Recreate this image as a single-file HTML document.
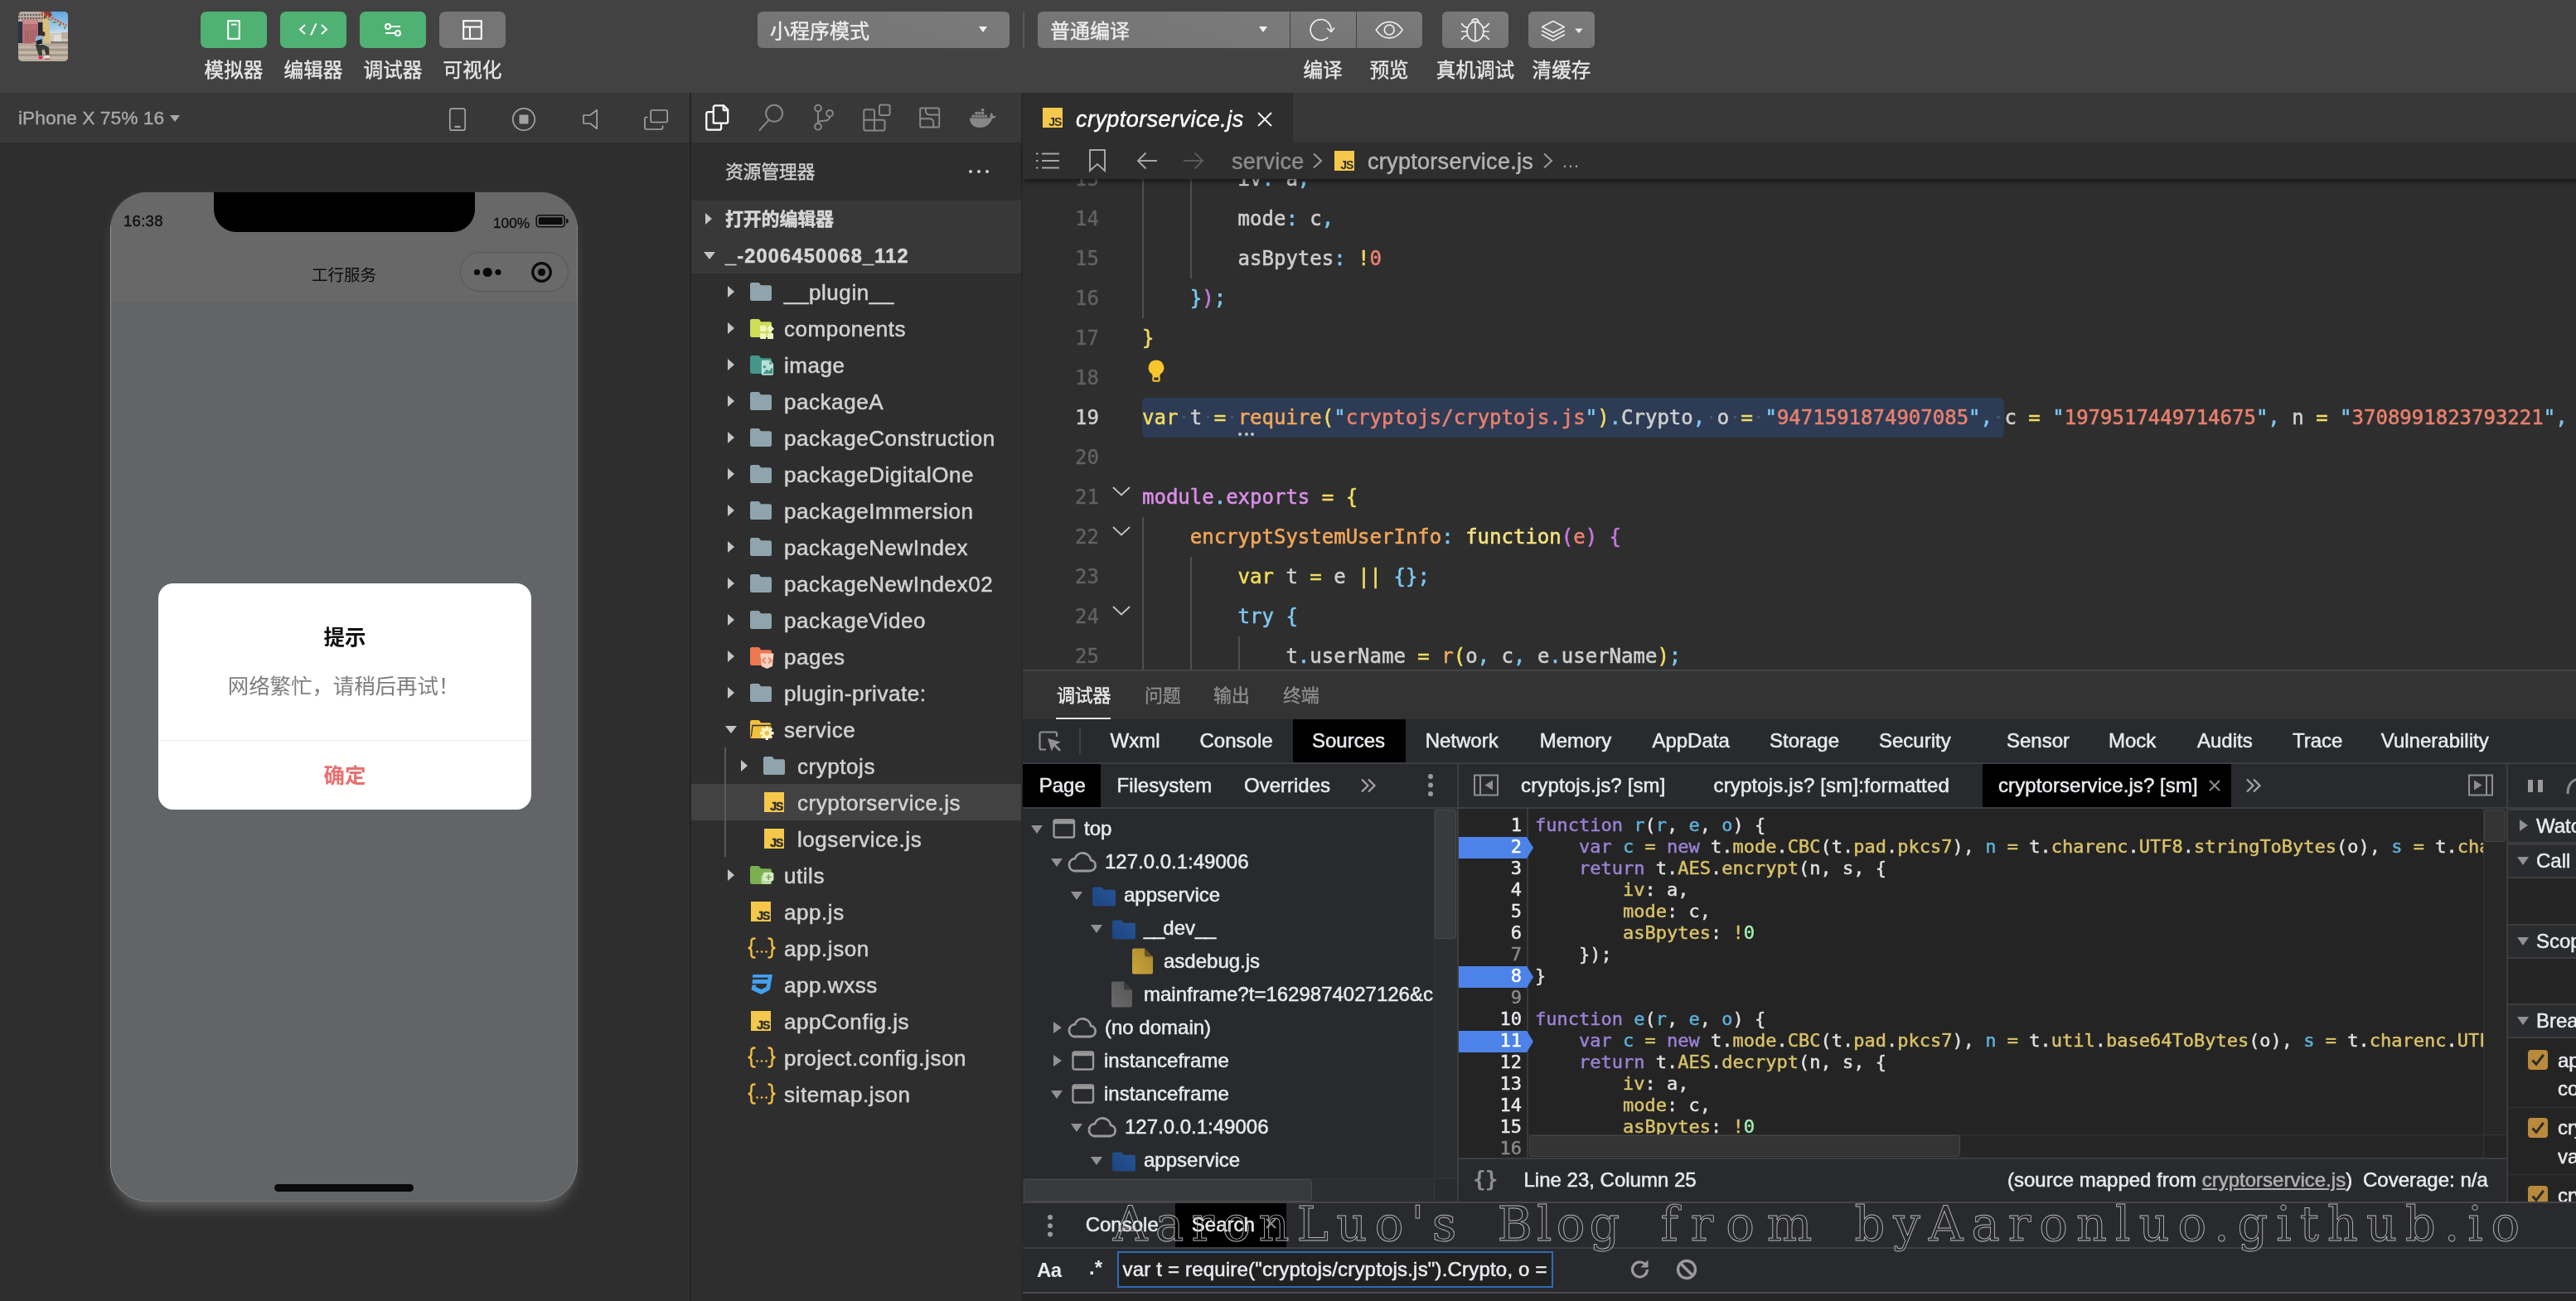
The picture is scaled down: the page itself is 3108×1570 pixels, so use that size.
<!DOCTYPE html>
<html lang="zh-CN">
<head>
<meta charset="utf-8">
<title>cryptorservice.js</title>
<style>
*{box-sizing:border-box;margin:0;padding:0}
html,body{width:3108px;height:1570px;overflow:hidden;background:#2e2e2e}
body{position:relative;font-family:"Liberation Sans","Noto Sans CJK SC",sans-serif;color:#d4d4d4;-webkit-font-smoothing:antialiased}
.abs{position:absolute}
.cjk{font-family:"Liberation Sans","Noto Sans CJK SC",sans-serif}
.mono{font-family:"DejaVu Sans Mono","Liberation Mono",monospace}
svg{display:block;overflow:visible}
/* top bar */
#topbar{left:0;top:0;width:3108px;height:112px;background:#424242}
.tbtn{top:14px;width:80px;height:44px;border-radius:7px;background:#50b174}
.tbtn.gray{background:#757575}
.tlabel{-webkit-text-stroke:.4px;top:66.500px;height:36px;line-height:36px;font-size:23.600px;color:#e6e6e6;text-align:center;white-space:nowrap}
.dd{-webkit-text-stroke:.4px;top:14px;height:44px;background:linear-gradient(200deg,#7b7b7b,#737373);color:#ededed;font-size:24px;line-height:44px;white-space:nowrap}
/* second row */
#row2{left:0;top:112px;width:3108px;height:60px;background:#383838}
/* sidebar */
.row{-webkit-text-stroke:.5px;left:834px;width:398px;height:44px;line-height:44px;font-size:26px;color:#d2d2d2;white-space:nowrap;letter-spacing:.55px}
.row .t{position:absolute;top:1px}
.tw{position:absolute;top:15px;width:0;height:0;border-style:solid}
.tw.r{border-width:7px 0 7px 8px;border-color:transparent transparent transparent #c4c4c4}
.tw.d{border-width:9px 7px 0 7px;border-color:#c4c4c4 transparent transparent transparent;top:18px}
.ico{position:absolute;top:8px;width:30px;height:28px}
/* editor */
.ln{left:1234px;width:92px;height:48px;line-height:48px;text-align:right;font-size:24px;color:#626262;-webkit-text-stroke:.4px}
.cl{left:1378px;height:48px;line-height:48px;font-size:24px;white-space:pre;color:#cecece;-webkit-text-stroke:.55px}
.guide{width:2px;background:#505050}
.fold{left:1342px;width:22px;height:12px}
/* syntax colours */
.y{color:#f1dc62}.o{color:#f2a65a}.s{color:#e8806e}.b{color:#7cc7f0}.g{color:#cecece}.v{color:#da8ee7}.p{color:#c678dd}.fy{color:#f6e27f}
/* devtools */
.dt{-webkit-text-stroke:.5px;font-size:24px;color:#e8eaed;white-space:nowrap;line-height:30px}
.tr{-webkit-text-stroke:.5px;height:40px;line-height:40px;font-size:24px;color:#e8eaed;white-space:nowrap;left:1234px;width:496px;overflow:hidden}
.tr .t{position:absolute;top:0}
.tri{position:absolute;width:0;height:0;border-style:solid}
.tri.d{border-width:10px 7.5px 0 7.5px;border-color:#919191 transparent transparent transparent;top:16px}
.tri.r{border-width:7.5px 0 7.5px 10px;border-color:transparent transparent transparent #919191;top:13px}
.sl{-webkit-text-stroke:.45px;left:1760px;width:76px;height:26px;line-height:26px;font-size:22px;text-align:right;color:#e8eaed}
.sc{-webkit-text-stroke:.45px;left:1852px;height:26px;line-height:26px;font-size:22px;white-space:pre;color:#e0e0e0}
.k{color:#9b82d6}.d{color:#5eb1d8}.pr{color:#d9c268}.n{color:#a4efb0}
.bp{left:1760px;width:90px;height:26px}
.sec{-webkit-text-stroke:.5px;left:3026px;width:82px;height:42px;background:#2a2b2e;border-top:2px solid #3d3d3d;border-bottom:2px solid #3d3d3d;font-size:24px;color:#e8eaed;line-height:38px;white-space:nowrap;overflow:hidden}
.cb{left:3050px;width:24px;height:24px;border-radius:4px;background:#b98a3c}
</style>
</head>
<body>
<div id="app" style="position:absolute;left:0;top:0;width:3108px;height:1570px;overflow:hidden;will-change:transform">
<!-- ============ TOP BAR ============ -->
<div id="topbar" class="abs"></div>
<div class="abs" style="left:22px;top:14px;width:60px;height:60px;border-radius:5px;overflow:hidden;background:#b5a898">
<svg width="60" height="60" viewBox="0 0 60 60">
<defs><filter id="avb" x="-10%" y="-10%" width="120%" height="120%"><feGaussianBlur stdDeviation=".55"/></filter>
<linearGradient id="sky" x1="0" y1="0" x2="0" y2="1"><stop offset="0" stop-color="#5aa2dd"/><stop offset=".7" stop-color="#a9cdea"/><stop offset="1" stop-color="#e4ecf0"/></linearGradient></defs>
<g filter="url(#avb)">
<rect x="-2" y="-2" width="64" height="64" fill="#b3a696"/>
<rect x="36" y="-2" width="26" height="32" fill="url(#sky)"/>
<rect x="-2" y="-2" width="40" height="14" fill="#b8aca2"/>
<path d="M0 4h36M0 8h34" stroke="#4a4040" stroke-width="1.600" stroke-dasharray="2 1.500"/>
<rect x="-2" y="12" width="8" height="26" fill="#2c3048"/>
<rect x="5" y="9.500" width="19" height="31" fill="#b56d70"/>
<rect x="6" y="10" width="17" height="5" fill="#c98a8a"/>
<path d="M9 22v17M12 22v17M15 22v17M18 22v17M21 22v17" stroke="#94545a" stroke-width=".800"/>
<rect x="24" y="13" width="6" height="18" fill="#2b2730"/>
<rect x="29.500" y="8" width="8.500" height="30" fill="#d9bf7c"/>
<path d="M31 0l8 0 2 5-10 4z" fill="#8a3a38"/>
<rect x="38" y="26" width="24" height="13" fill="#cfc9bc"/>
<rect x="43" y="28" width="9" height="9" fill="#e2ded6"/>
<rect x="52" y="25" width="10" height="8" fill="#b9b0a0"/>
<rect x="39" y="36" width="23" height="4" fill="#7e7a76"/>
<rect x="-2" y="38.500" width="64" height="24" fill="#b7aa9a"/>
<path d="M-2 46h64M-2 52.500h64" stroke="#8e8274" stroke-width="1.200"/>
<path d="M-2 43h64M-2 49.500h64M-2 56h64" stroke="#c9beb0" stroke-width="1.600"/>
<path d="M28 1L60 18" stroke="#c84a4a" stroke-width="2.600" stroke-dasharray="2 1.600"/>
<path d="M30 3.500L60 20" stroke="#e2c23c" stroke-width="2" stroke-dasharray="1.600 3.400"/>
<path d="M33 6.500L58 20" stroke="#3c9a58" stroke-width="2" stroke-dasharray="1.400 5"/>
<path d="M36 9L60 22" stroke="#3a64b8" stroke-width="1.800" stroke-dasharray="1.400 6"/>
<circle cx="29.500" cy="27" r="3" fill="#3a2f2e"/>
<path d="M21 31c2-2.500 6-3 9-1.500l.5 8-10 1z" fill="#8db2d6"/>
<path d="M21.500 35.500l7-2.500.5 5.500-7 1.500z" fill="#1f2026"/>
<path d="M20.500 40l10 0 6.500 3 .500 9-4 .500-2-7-3 .500 .500 7-4 .500z" fill="#393d37"/>
<path d="M18 37l-2.500 7 2 .500 2.500-6z" fill="#c9a58c"/>
<ellipse cx="27" cy="55.500" rx="2.600" ry="2" fill="#da2f68"/>
<ellipse cx="34.500" cy="55" rx="3.400" ry="2.200" fill="#e8dede"/>
<path d="M32 56.500l6 0 .5 1-6 .200z" fill="#c23a4a"/>
</g></svg></div>

<div class="abs tbtn" style="left:242px"><svg width="80" height="44" viewBox="0 0 80 44" fill="none" stroke="#fff" stroke-width="2"><rect x="33.2" y="11.2" width="13.6" height="21.6"/><path d="M37 15.6h6.5"/></svg></div>
<div class="abs tbtn" style="left:338px"><svg width="80" height="44" viewBox="0 0 80 44" fill="none" stroke="#fff" stroke-width="2" stroke-linejoin="miter"><path d="M30 16l-6 5.5 6 5.5M50 16l6 5.5-6 5.5M43.5 14.5l-6.5 14"/></svg></div>
<div class="abs tbtn" style="left:434px"><svg width="80" height="44" viewBox="0 0 80 44" fill="none" stroke="#fff" stroke-width="2"><circle cx="34" cy="18" r="3"/><path d="M37 18h12"/><circle cx="46" cy="26" r="3"/><path d="M31 26h12"/></svg></div>
<div class="abs tbtn gray" style="left:530px"><svg width="80" height="44" viewBox="0 0 80 44" fill="none" stroke="#fff" stroke-width="2"><rect x="29.2" y="11.2" width="21.6" height="21.6"/><path d="M29 18.5h22M37 18.5v14"/></svg></div>
<div class="abs tlabel cjk" style="left:232px;width:100px">模拟器</div>
<div class="abs tlabel cjk" style="left:328px;width:100px">编辑器</div>
<div class="abs tlabel cjk" style="left:424px;width:100px">调试器</div>
<div class="abs tlabel cjk" style="left:520px;width:100px">可视化</div>

<div class="abs dd cjk" style="left:914px;width:304px;border-radius:6px;padding:2px 0 0 15px">小程序模式</div>
<div class="abs" style="left:1181px;top:32px;width:0;height:0;border-style:solid;border-width:7px 5.5px 0 5.5px;border-color:#f0f0f0 transparent transparent transparent"></div>
<div class="abs" style="left:1234px;top:14px;width:2px;height:44px;background:#595959"></div>
<div class="abs dd cjk" style="left:1252px;width:304px;border-radius:6px 0 0 6px;padding:2px 0 0 15px">普通编译</div>
<div class="abs" style="left:1519px;top:32px;width:0;height:0;border-style:solid;border-width:7px 5.5px 0 5.5px;border-color:#f0f0f0 transparent transparent transparent"></div>
<div class="abs dd" style="left:1557px;width:79px"><svg width="79" height="44" viewBox="0 0 79 44" fill="none" stroke="#ededed" stroke-width="1.700" stroke-linecap="round" stroke-linejoin="round"><path d="M48.900 24.200A12.500 12.500 0 1 0 44.600 31.600"/><path d="M44.800 20.500l4.200 4 3.600-4.600"/></svg></div>
<div class="abs dd" style="left:1637px;width:79px;border-radius:0 6px 6px 0"><svg width="79" height="44" viewBox="0 0 79 44" fill="none" stroke="#ededed" stroke-width="1.700"><path d="M23.300 22.100c4.200-6.500 9.600-9.700 15.900-9.700s11.700 3.200 15.900 9.700c-4.200 6.500-9.600 9.700-15.900 9.700s-11.700-3.200-15.900-9.700z"/><circle cx="39.200" cy="22.100" r="5.900"/></svg></div>
<div class="abs dd" style="left:1740px;width:80px;border-radius:6px"><svg width="80" height="44" viewBox="0 0 80 44" fill="none" stroke="#ededed" stroke-width="1.700" stroke-linecap="round" stroke-linejoin="round"><ellipse cx="39.900" cy="24" rx="10" ry="11.600"/><path d="M39.900 12.400v23.200"/><path d="M35.800 12.200a4.200 4.200 0 0 1 8.200 0"/><path d="M30.600 19.400l-3.600-1-3.400-3.700M49.200 19.400l3.600-1 3.400-3.700M29.900 24h-6.300M49.900 24h6.300M30.600 28.700l-3.600 1-3.400 3.700M49.200 28.700l3.600 1 3.400 3.700"/></svg></div>
<div class="abs dd" style="left:1844px;width:80px;border-radius:6px"><svg width="80" height="44" viewBox="0 0 80 44" fill="none" stroke="#ededed" stroke-width="1.700" stroke-linejoin="round" stroke-linecap="round"><path d="M29.900 11.600L43.200 18.600 29.900 25.600 16.600 18.600z"/><path d="M16.600 23.300L29.900 30.300 43.200 23.300"/><path d="M16.600 27.900L29.900 34.900 43.200 27.900"/><path d="M56.200 20.500h9.400l-4.700 5.600z" fill="#ededed" stroke="none"/></svg></div>
<div class="abs tlabel cjk" style="left:1546px;width:100px">编译</div>
<div class="abs tlabel cjk" style="left:1626px;width:100px">预览</div>
<div class="abs tlabel cjk" style="left:1720px;width:120px">真机调试</div>
<div class="abs tlabel cjk" style="left:1834px;width:100px">清缓存</div>
<!-- ============ ROW 2: sim toolbar / activity bar / tabs ============ -->
<div id="row2" class="abs"></div>
<div class="abs" style="left:22px;top:124px;height:36px;line-height:36px;font-size:22.800px;color:#a8a8a8;white-space:nowrap;-webkit-text-stroke:.4px" id="simname">iPhone X 75% 16</div>
<div class="abs" style="left:205px;top:139px;width:0;height:0;border-style:solid;border-width:8px 6px 0 6px;border-color:#a8a8a8 transparent transparent transparent"></div>
<svg class="abs" style="left:500px;top:112px" width="336" height="60" viewBox="0 0 336 60" fill="none" stroke="#a2a2a2" stroke-width="1.7" stroke-linejoin="round">
  <rect x="42.8" y="19.200" width="18.400" height="26" rx="2.500"/><path d="M48.500 41h7" stroke-width="2.200"/>
  <circle cx="132" cy="32" r="13.200"/><rect x="126.500" y="26.500" width="11" height="11" rx="1" fill="#a2a2a2" stroke="none"/>
  <path d="M204 27h8l8.200-6.200v22.400L212 37h-8z"/>
  <rect x="285.200" y="21" width="20" height="14.500" rx="1.500"/><path d="M281.500 29.500h-2a1.500 1.500 0 0 0-1.500 1.500v11.500a1.500 1.500 0 0 0 1.500 1.500h18.500a1.500 1.500 0 0 0 1.500-1.500v-3"/>
</svg>
<div class="abs" style="left:832px;top:112px;width:2px;height:1458px;background:#232323"></div>
<!-- activity bar -->
<svg class="abs" style="left:836px;top:112px" width="396" height="60" viewBox="0 0 396 60" fill="none" stroke="#878787" stroke-width="2" stroke-linejoin="round" stroke-linecap="round">
  <g stroke="#ffffff" stroke-width="2.300">
    <path d="M24.800 36.600V17.500a2.200 2.200 0 0 1 2.200-2.200h10.200l5 5.200v14a2.200 2.200 0 0 1-2.200 2.200H27a2.200 2.200 0 0 1-2.200-2.200z"/>
    <path d="M36.800 15.600v5.400h5.200"/>
    <path d="M24.500 23.200h-6a2.200 2.200 0 0 0-2.200 2.200v17a2.200 2.200 0 0 0 2.200 2.200h13.400a2.200 2.200 0 0 0 2.200-2.200v-5.500"/>
  </g>
  <circle cx="98.100" cy="24.800" r="10"/><path d="M91.500 32.800L80.500 45"/>
  <circle cx="151" cy="18.600" r="3.900"/><circle cx="165" cy="24.800" r="3.900"/><circle cx="151" cy="40.800" r="3.900"/><path d="M151 22.500v14.400M165 28.700c0 4.500-3.500 5-7 5s-7 .6-7 3.200"/>
  <path d="M206.300 22.300a2 2 0 0 1 2-2h8.700a2 2 0 0 1 2 2v10.500h10.500a2 2 0 0 1 2 2v8.700a2 2 0 0 1-2 2h-21.200a2 2 0 0 1-2-2z"/><path d="M206.300 32.800H219v12.700"/><rect x="225" y="14.500" width="12.600" height="12.600" rx="2"/>
  <rect x="274.200" y="18.500" width="23" height="23" rx="1.500"/><path d="M281 18.500v3.500c0 3 2 4.500 5 4.500h11.200M274.200 31.200h11c3 0 5 1.500 5 4.500v5.800"/>
  <g stroke="none" fill="#878787">
    <path d="M333.900 30.500H358.200C358 28 358.800 25.600 360.200 24C361.600 25.200 362.300 26.800 362.200 28.400C363.300 27.800 364.600 27.800 365.700 28.300C365 30 363.300 31 361.200 31C359 37.500 354 42 346 42C338.500 42 334.300 37.500 333.900 30.500Z"/>
    <rect x="336.600" y="26.700" width="3.300" height="3.100"/><rect x="340.400" y="26.700" width="3.300" height="3.100"/><rect x="344.200" y="26.700" width="3.300" height="3.100"/><rect x="348" y="26.700" width="3.300" height="3.100"/><rect x="351.800" y="26.700" width="3.300" height="3.100"/>
    <rect x="340.400" y="22.900" width="3.300" height="3.100"/><rect x="344.200" y="22.900" width="3.300" height="3.100"/><rect x="348" y="22.900" width="3.300" height="3.100"/>
    <rect x="348" y="19.100" width="3.300" height="3.100"/>
  </g>
</svg>
<div class="abs" style="left:1232px;top:112px;width:2px;height:1458px;background:#292929"></div>
<!-- editor tab -->
<div class="abs" style="left:1234px;top:112px;width:326px;height:60px;background:#2e2e2e"></div>
<div class="abs" style="left:1258px;top:130px;width:24px;height:24px;background:#f5c84b"></div>
<div class="abs" style="left:1258px;top:130px;width:24px;height:24px;font-size:14px;font-weight:bold;color:#2e2e2e;line-height:14px;text-align:right;padding:9.500px 1.500px 0 0;letter-spacing:-.9px">JS</div>
<div class="abs" style="left:1298px;top:124px;height:40px;line-height:40px;font-size:27px;-webkit-text-stroke:.4px;font-style:italic;color:#ffffff;white-space:nowrap;letter-spacing:.45px" id="tabname">cryptorservice.js</div>
<svg class="abs" style="left:1517px;top:135px" width="18" height="18" viewBox="0 0 18 18" stroke="#f0f0f0" stroke-width="2" fill="none"><path d="M1 1l16 16M17 1L1 17"/></svg>
<!-- breadcrumb -->
<div class="abs" style="left:1234px;top:172px;width:1900px;height:44px;background:#2e2e2e;z-index:5;box-shadow:0 4px 6px -1px rgba(0,0,0,.5)"></div>
<svg class="abs" style="left:1234px;top:172px;z-index:6" width="700" height="44" viewBox="0 0 700 44" fill="none" stroke="#a6a6a6" stroke-width="2" stroke-linecap="butt">
  <path d="M23 13.500h21M23 22h21M23 30.500h21"/><path d="M16 13.500h2.500M16 22h2.500M16 30.500h2.500"/>
  <path d="M81 9h18v25l-9-8-9 8z" stroke-linejoin="miter"/>
  <path d="M162 22h-23M148.500 12.500L139 22l9.500 9.500" />
  <path d="M194 22h23M207.500 12.500L217 22l-9.500 9.500" stroke="#5a5a5a"/>
  <path d="M351 13.500l9 8.500-9 8.500" stroke="#9a9a9a"/>
  <path d="M629 13.500l9 8.500-9 8.500" stroke="#9a9a9a"/>
</svg>
<div class="abs" style="left:1486px;top:175px;height:40px;line-height:40px;font-size:27px;color:#8c8c8c;white-space:nowrap;z-index:6;letter-spacing:.3px;-webkit-text-stroke:.45px" id="bc1">service</div>
<div class="abs" style="left:1610px;top:182px;width:24px;height:24px;background:#f5c84b;z-index:6"></div>
<div class="abs" style="left:1610px;top:182px;width:24px;height:24px;font-size:14px;font-weight:bold;color:#2e2e2e;line-height:14px;text-align:right;padding:9.500px 1.500px 0 0;letter-spacing:-.9px;z-index:6">JS</div>
<div class="abs" style="left:1650px;top:175px;height:40px;line-height:40px;font-size:27px;color:#b4b4b4;white-space:nowrap;z-index:6;letter-spacing:.3px;-webkit-text-stroke:.45px" id="bc2">cryptorservice.js</div>
<div class="abs" style="left:1884px;top:175px;height:40px;line-height:40px;font-size:22px;color:#a0a0a0;white-space:nowrap;z-index:6;letter-spacing:-.5px">…</div>
<!-- ============ SIMULATOR ============ -->
<div class="abs" style="left:133px;top:232px;width:564px;height:1218px;border-radius:45px;background:#636466;overflow:hidden;box-shadow:0 16px 20px -12px rgba(160,160,160,.55),0 4px 14px rgba(130,130,130,.18)">
  <div class="abs" style="left:0;top:0;width:564px;height:132px;background:#686868"></div>
  <div class="abs" style="left:125px;top:-30px;width:315px;height:78px;border-radius:27px;background:#000"></div>
  <div class="abs" style="left:16px;top:22px;height:26px;line-height:26px;font-size:18.500px;letter-spacing:.3px;-webkit-text-stroke:.3px;color:#0c0c0c;white-space:nowrap">16:38</div>
  <div class="abs" style="left:462px;top:24px;height:26px;line-height:26px;font-size:17.300px;-webkit-text-stroke:.3px;color:#0c0c0c;white-space:nowrap">100%</div>
  <svg class="abs" style="left:513px;top:26px" width="42" height="18" viewBox="0 0 42 18"><rect x="1.200" y="1.700" width="34" height="14" rx="3.500" fill="none" stroke="#0c0c0c" stroke-width="1.600"/><rect x="3.800" y="4.300" width="28.800" height="8.800" rx="1.500" fill="#0c0c0c"/><path d="M37.200 5.800c2 .5 2.600 1.500 2.600 2.900s-.6 2.400-2.600 2.900z" fill="#0c0c0c"/></svg>
  <div class="abs cjk" style="left:0;top:82px;width:564px;height:36px;line-height:36px;font-size:19.500px;color:#0c0c0c;text-align:center">工行服务</div>
  <div class="abs" style="left:422px;top:72px;width:131px;height:48px;border-radius:24px;border:1px solid rgba(0,0,0,.16);background:rgba(110,110,110,.25)"></div>
  <svg class="abs" style="left:422px;top:72px" width="131" height="48" viewBox="0 0 131 48"><circle cx="20.500" cy="24.500" r="3.600" fill="#0a0a0a"/><circle cx="33.200" cy="24.500" r="5.600" fill="#0a0a0a"/><circle cx="46" cy="24.500" r="3.600" fill="#0a0a0a"/><circle cx="98.500" cy="24.500" r="10.800" fill="none" stroke="#0a0a0a" stroke-width="3.200"/><circle cx="98.500" cy="24.500" r="4.600" fill="#0a0a0a"/></svg>
  <!-- dialog -->
  <div class="abs" style="left:58px;top:472px;width:450px;height:273px;border-radius:18px;background:#fff;overflow:hidden">
    <div class="abs cjk" style="left:0;top:45px;width:450px;height:40px;line-height:40px;font-size:25.500px;font-weight:bold;color:#111;text-align:center">提示</div>
    <div class="abs cjk" style="left:0;top:104px;width:450px;height:40px;line-height:40px;font-size:25.500px;color:#7f7f7f;text-align:center;letter-spacing:-.1px;text-indent:-3px">网络繁忙，请稍后再试！</div>
    <div class="abs" style="left:0;top:189px;width:450px;height:1px;background:#ececec"></div>
    <div class="abs cjk" style="left:0;top:212px;width:450px;height:40px;line-height:40px;font-size:25.500px;font-weight:bold;color:#e9706f;text-align:center">确定</div>
  </div>
  <div class="abs" style="left:0;top:40px;width:564px;height:1178px;border-radius:0 0 45px 45px;box-shadow:inset 1px 0 0 rgba(255,255,255,.30),inset -1px 0 0 rgba(255,255,255,.18),inset 0 -1px 0 rgba(255,255,255,.12);pointer-events:none"></div>
  <div class="abs" style="left:198px;top:1197px;width:168px;height:9px;border-radius:4.500px;background:#0a0a0a"></div>
</div>
<!-- ============ SIDEBAR ============ -->
<div class="abs cjk" style="left:875px;top:188px;height:40px;line-height:40px;font-size:22px;color:#cfcfcf;white-space:nowrap;letter-spacing:-.4px;-webkit-text-stroke:.35px">资源管理器</div>
<div class="abs" style="left:1168.500px;top:204.500px;width:4px;height:4px;border-radius:50%;background:#d0d0d0;box-shadow:10px 0 0 #d0d0d0,20px 0 0 #d0d0d0"></div>
<div class="abs" style="left:834px;top:242px;width:398px;height:88px;background:#383838"></div>
<div class="abs row cjk" style="top:242px;font-size:22px;font-weight:bold;color:#d6d6d6;letter-spacing:-.2px"><i class="tw r" style="left:17px"></i><span class="t" style="left:41px">打开的编辑器</span></div>
<div class="abs row" style="top:286px;font-size:23.500px;font-weight:bold;color:#d6d6d6;letter-spacing:1.2px" id="projname"><i class="tw d" style="left:15px"></i><span class="t" style="left:41px">_-2006450068_112</span></div>
<div class="abs row" style="top:330px;"><i class="tw r" style="left:44px"></i><svg style="position:absolute;left:71px;top:9px" width="30" height="26" viewBox="0 0 30 26"><path d="M0 4.200a2.200 2.200 0 0 1 2.200-2.200h7.500a2.200 2.200 0 0 1 1.800.900l1.600 2.300h10.700a2.200 2.200 0 0 1 2.200 2.200v14.400a2.200 2.200 0 0 1-2.200 2.200h-21.600a2.200 2.200 0 0 1-2.200-2.200z" fill="#90a4ae"/></svg><span class="t" style="left:112px">__plugin__</span></div>
<div class="abs row" style="top:374px;"><i class="tw r" style="left:44px"></i><svg style="position:absolute;left:71px;top:9px" width="30" height="26" viewBox="0 0 30 26"><path d="M0 4.200a2.200 2.200 0 0 1 2.200-2.200h7.500a2.200 2.200 0 0 1 1.800.900l1.600 2.300h10.700a2.200 2.200 0 0 1 2.200 2.200v14.400a2.200 2.200 0 0 1-2.200 2.200h-21.600a2.200 2.200 0 0 1-2.200-2.200z" fill="#cfdc58"/><g fill="#f2f5c6"><rect x="12.200" y="10.100" width="7" height="6.800"/><rect x="12.200" y="19.200" width="7" height="6.800"/><rect x="21" y="19.200" width="7" height="6.800"/><rect x="-3.300" y="-3.300" width="6.600" height="6.600" transform="translate(24.400,13.800) rotate(45)"/></g></svg><span class="t" style="left:112px">components</span></div>
<div class="abs row" style="top:418px;"><i class="tw r" style="left:44px"></i><svg style="position:absolute;left:71px;top:9px" width="30" height="26" viewBox="0 0 30 26"><path d="M0 4.200a2.200 2.200 0 0 1 2.200-2.200h7.500a2.200 2.200 0 0 1 1.800.900l1.600 2.300h10.700a2.200 2.200 0 0 1 2.200 2.200v14.400a2.200 2.200 0 0 1-2.200 2.200h-21.600a2.200 2.200 0 0 1-2.200-2.200z" fill="#44968a"/><path d="M15.200 7.800h8.600l4.300 4.300v12.200a1.400 1.400 0 0 1-1.400 1.400h-11.500a1.400 1.400 0 0 1-1.400-1.400v-15.100a1.400 1.400 0 0 1 1.400-1.400z" fill="#b7e0dc"/><path d="M15.400 24l4.800-5.600 2.400 2.600 3.600-4.200 1 1.200v6z" fill="#44968a"/><circle cx="17.400" cy="15.800" r="1.700" fill="#44968a"/><path d="M23.200 8.600l4 4.100h-4z" fill="#44968a"/></svg><span class="t" style="left:112px">image</span></div>
<div class="abs row" style="top:462px;"><i class="tw r" style="left:44px"></i><svg style="position:absolute;left:71px;top:9px" width="30" height="26" viewBox="0 0 30 26"><path d="M0 4.200a2.200 2.200 0 0 1 2.200-2.200h7.500a2.200 2.200 0 0 1 1.800.900l1.600 2.300h10.700a2.200 2.200 0 0 1 2.200 2.200v14.400a2.200 2.200 0 0 1-2.200 2.200h-21.600a2.200 2.200 0 0 1-2.200-2.200z" fill="#90a4ae"/></svg><span class="t" style="left:112px">packageA</span></div>
<div class="abs row" style="top:506px;"><i class="tw r" style="left:44px"></i><svg style="position:absolute;left:71px;top:9px" width="30" height="26" viewBox="0 0 30 26"><path d="M0 4.200a2.200 2.200 0 0 1 2.200-2.200h7.500a2.200 2.200 0 0 1 1.800.900l1.600 2.300h10.700a2.200 2.200 0 0 1 2.200 2.200v14.400a2.200 2.200 0 0 1-2.200 2.200h-21.600a2.200 2.200 0 0 1-2.200-2.200z" fill="#90a4ae"/></svg><span class="t" style="left:112px">packageConstruction</span></div>
<div class="abs row" style="top:550px;"><i class="tw r" style="left:44px"></i><svg style="position:absolute;left:71px;top:9px" width="30" height="26" viewBox="0 0 30 26"><path d="M0 4.200a2.200 2.200 0 0 1 2.200-2.200h7.500a2.200 2.200 0 0 1 1.800.900l1.600 2.300h10.700a2.200 2.200 0 0 1 2.200 2.200v14.400a2.200 2.200 0 0 1-2.200 2.200h-21.600a2.200 2.200 0 0 1-2.200-2.200z" fill="#90a4ae"/></svg><span class="t" style="left:112px">packageDigitalOne</span></div>
<div class="abs row" style="top:594px;"><i class="tw r" style="left:44px"></i><svg style="position:absolute;left:71px;top:9px" width="30" height="26" viewBox="0 0 30 26"><path d="M0 4.200a2.200 2.200 0 0 1 2.200-2.200h7.500a2.200 2.200 0 0 1 1.800.900l1.600 2.300h10.700a2.200 2.200 0 0 1 2.200 2.200v14.400a2.200 2.200 0 0 1-2.200 2.200h-21.600a2.200 2.200 0 0 1-2.200-2.200z" fill="#90a4ae"/></svg><span class="t" style="left:112px">packageImmersion</span></div>
<div class="abs row" style="top:638px;"><i class="tw r" style="left:44px"></i><svg style="position:absolute;left:71px;top:9px" width="30" height="26" viewBox="0 0 30 26"><path d="M0 4.200a2.200 2.200 0 0 1 2.200-2.200h7.500a2.200 2.200 0 0 1 1.800.900l1.600 2.300h10.700a2.200 2.200 0 0 1 2.200 2.200v14.400a2.200 2.200 0 0 1-2.200 2.200h-21.600a2.200 2.200 0 0 1-2.200-2.200z" fill="#90a4ae"/></svg><span class="t" style="left:112px">packageNewIndex</span></div>
<div class="abs row" style="top:682px;"><i class="tw r" style="left:44px"></i><svg style="position:absolute;left:71px;top:9px" width="30" height="26" viewBox="0 0 30 26"><path d="M0 4.200a2.200 2.200 0 0 1 2.200-2.200h7.500a2.200 2.200 0 0 1 1.800.900l1.600 2.300h10.700a2.200 2.200 0 0 1 2.200 2.200v14.400a2.200 2.200 0 0 1-2.200 2.200h-21.600a2.200 2.200 0 0 1-2.200-2.200z" fill="#90a4ae"/></svg><span class="t" style="left:112px">packageNewIndex02</span></div>
<div class="abs row" style="top:726px;"><i class="tw r" style="left:44px"></i><svg style="position:absolute;left:71px;top:9px" width="30" height="26" viewBox="0 0 30 26"><path d="M0 4.200a2.200 2.200 0 0 1 2.200-2.200h7.500a2.200 2.200 0 0 1 1.800.900l1.600 2.300h10.700a2.200 2.200 0 0 1 2.200 2.200v14.400a2.200 2.200 0 0 1-2.200 2.200h-21.600a2.200 2.200 0 0 1-2.200-2.200z" fill="#90a4ae"/></svg><span class="t" style="left:112px">packageVideo</span></div>
<div class="abs row" style="top:770px;"><i class="tw r" style="left:44px"></i><svg style="position:absolute;left:71px;top:9px" width="30" height="26" viewBox="0 0 30 26"><path d="M0 4.200a2.200 2.200 0 0 1 2.200-2.200h7.500a2.200 2.200 0 0 1 1.800.900l1.600 2.300h10.700a2.200 2.200 0 0 1 2.200 2.200v14.400a2.200 2.200 0 0 1-2.200 2.200h-21.600a2.200 2.200 0 0 1-2.200-2.200z" fill="#ee7850"/><path d="M12.300 9.600h16.200l-1.500 15.300-6.600 3-6.600-3z" fill="#f9d0c2"/><path d="M18.600 14.700l-3.500 3.300 3.500 3.300M22.200 14.700l3.500 3.300-3.500 3.300" stroke="#ee7850" stroke-width="1.700" fill="none"/></svg><span class="t" style="left:112px">pages</span></div>
<div class="abs row" style="top:814px;"><i class="tw r" style="left:44px"></i><svg style="position:absolute;left:71px;top:9px" width="30" height="26" viewBox="0 0 30 26"><path d="M0 4.200a2.200 2.200 0 0 1 2.200-2.200h7.500a2.200 2.200 0 0 1 1.800.900l1.600 2.300h10.700a2.200 2.200 0 0 1 2.200 2.200v14.400a2.200 2.200 0 0 1-2.200 2.200h-21.600a2.200 2.200 0 0 1-2.200-2.200z" fill="#90a4ae"/></svg><span class="t" style="left:112px">plugin-private:</span></div>
<div class="abs row" style="top:858px;"><i class="tw d" style="left:41px"></i><svg style="position:absolute;left:71px;top:9px" width="30" height="26" viewBox="0 0 30 26"><path d="M0 4.200a2.200 2.200 0 0 1 2.200-2.200h7.500a2.200 2.200 0 0 1 1.800.900l1.600 2.300h10a2.200 2.200 0 0 1 2.200 2.200v14.400a2.200 2.200 0 0 1-2.200 2.200h-20.900a2.200 2.200 0 0 1-2.200-2.200z" fill="#f2bf3f"/><path d="M1.300 22l1.700-13.500h22.500" fill="none" stroke="#2e2e2e" stroke-width="1.300"/><g transform="translate(20.300,17.700)" fill="#fdf3c8"><rect x="-1.700" y="-8.300" width="3.400" height="3.600" rx=".600" transform="rotate(0)"/><rect x="-1.700" y="-8.300" width="3.400" height="3.600" rx=".600" transform="rotate(45)"/><rect x="-1.700" y="-8.300" width="3.400" height="3.600" rx=".600" transform="rotate(90)"/><rect x="-1.700" y="-8.300" width="3.400" height="3.600" rx=".600" transform="rotate(135)"/><rect x="-1.700" y="-8.300" width="3.400" height="3.600" rx=".600" transform="rotate(180)"/><rect x="-1.700" y="-8.300" width="3.400" height="3.600" rx=".600" transform="rotate(225)"/><rect x="-1.700" y="-8.300" width="3.400" height="3.600" rx=".600" transform="rotate(270)"/><rect x="-1.700" y="-8.300" width="3.400" height="3.600" rx=".600" transform="rotate(315)"/><circle r="6"/><circle r="2.800" fill="#f2bf3f"/></g></svg><span class="t" style="left:112px">service</span></div>
<div class="abs row" style="top:902px;"><i class="tw r" style="left:60px"></i><svg style="position:absolute;left:87px;top:9px" width="30" height="26" viewBox="0 0 30 26"><path d="M0 4.200a2.200 2.200 0 0 1 2.200-2.200h7.500a2.200 2.200 0 0 1 1.800.900l1.600 2.300h10.700a2.200 2.200 0 0 1 2.200 2.200v14.400a2.200 2.200 0 0 1-2.200 2.200h-21.600a2.200 2.200 0 0 1-2.200-2.200z" fill="#90a4ae"/></svg><span class="t" style="left:128px">cryptojs</span></div>
<div class="abs row" style="top:946px; background:#424242;"><span style="position:absolute;left:88px;top:10px;width:24px;height:24px;background:#f5c84b"></span><span style="position:absolute;left:88px;top:10px;width:24px;height:24px;font-size:14px;font-weight:bold;color:#2e2e2e;line-height:14px;text-align:right;padding:9.500px 1.500px 0 0;letter-spacing:-.9px">JS</span><span class="t" style="left:128px">cryptorservice.js</span></div>
<div class="abs row" style="top:990px;"><span style="position:absolute;left:88px;top:10px;width:24px;height:24px;background:#f5c84b"></span><span style="position:absolute;left:88px;top:10px;width:24px;height:24px;font-size:14px;font-weight:bold;color:#2e2e2e;line-height:14px;text-align:right;padding:9.500px 1.500px 0 0;letter-spacing:-.9px">JS</span><span class="t" style="left:128px">logservice.js</span></div>
<div class="abs row" style="top:1034px;"><i class="tw r" style="left:44px"></i><svg style="position:absolute;left:71px;top:9px" width="30" height="26" viewBox="0 0 30 26"><path d="M0 4.200a2.200 2.200 0 0 1 2.200-2.200h7.500a2.200 2.200 0 0 1 1.800.900l1.600 2.300h10.700a2.200 2.200 0 0 1 2.200 2.200v14.400a2.200 2.200 0 0 1-2.200 2.200h-21.600a2.200 2.200 0 0 1-2.200-2.200z" fill="#7cb04f"/><rect x="13.500" y="13.200" width="12.200" height="10.800" rx="2" fill="#cfe4bb" opacity=".75"/><rect x="15.700" y="9.800" width="12.700" height="10.400" rx="2" fill="#d9ebc8"/><path d="M22.300 12v7M18.800 15.500h7" stroke="#7cb04f" stroke-width="1.700"/></svg><span class="t" style="left:112px">utils</span></div>
<div class="abs row" style="top:1078px;"><span style="position:absolute;left:72px;top:10px;width:24px;height:24px;background:#f5c84b"></span><span style="position:absolute;left:72px;top:10px;width:24px;height:24px;font-size:14px;font-weight:bold;color:#2e2e2e;line-height:14px;text-align:right;padding:9.500px 1.500px 0 0;letter-spacing:-.9px">JS</span><span class="t" style="left:112px">app.js</span></div>
<div class="abs row" style="top:1122px;"><svg style="position:absolute;left:68px;top:9px" width="34" height="26" viewBox="0 0 34 26" fill="none" stroke="#f2bd42" stroke-width="2.400" stroke-linecap="round" stroke-linejoin="round"><path d="M8.500 1.500c-3 0-4 1-4 3.500v4c0 2.200-.800 3.500-3 4 2.200.500 3 1.800 3 4v4c0 2.500 1 3.500 4 3.500"/><path d="M25.500 1.500c3 0 4 1 4 3.500v4c0 2.200.800 3.500 3 4-2.200.500-3 1.800-3 4v4c0 2.500-1 3.500-4 3.500"/><path d="M11.500 17.500h.1M17 17.500h.1M22.500 17.500h.1" stroke-width="2.600"/></svg><span class="t" style="left:112px">app.json</span></div>
<div class="abs row" style="top:1166px;"><svg style="position:absolute;left:71px;top:9px" width="28" height="26" viewBox="0 0 28 26"><path d="M3.500 1h23.500l-3.200 18.500-10.300 5.500-12-5.500 1.200-6h4.600l-.400 2.600 6.800 3 5.800-3 .800-4.200h-18l1-5h18l.500-2.200h-19z" fill="#42a0f0"/></svg><span class="t" style="left:112px">app.wxss</span></div>
<div class="abs row" style="top:1210px;"><span style="position:absolute;left:72px;top:10px;width:24px;height:24px;background:#f5c84b"></span><span style="position:absolute;left:72px;top:10px;width:24px;height:24px;font-size:14px;font-weight:bold;color:#2e2e2e;line-height:14px;text-align:right;padding:9.500px 1.500px 0 0;letter-spacing:-.9px">JS</span><span class="t" style="left:112px">appConfig.js</span></div>
<div class="abs row" style="top:1254px;"><svg style="position:absolute;left:68px;top:9px" width="34" height="26" viewBox="0 0 34 26" fill="none" stroke="#f2bd42" stroke-width="2.400" stroke-linecap="round" stroke-linejoin="round"><path d="M8.500 1.500c-3 0-4 1-4 3.500v4c0 2.200-.800 3.500-3 4 2.200.500 3 1.800 3 4v4c0 2.500 1 3.500 4 3.500"/><path d="M25.500 1.500c3 0 4 1 4 3.500v4c0 2.200.800 3.500 3 4-2.200.500-3 1.800-3 4v4c0 2.500-1 3.500-4 3.500"/><path d="M11.500 17.500h.1M17 17.500h.1M22.500 17.500h.1" stroke-width="2.600"/></svg><span class="t" style="left:112px">project.config.json</span></div>
<div class="abs row" style="top:1298px;"><svg style="position:absolute;left:68px;top:9px" width="34" height="26" viewBox="0 0 34 26" fill="none" stroke="#f2bd42" stroke-width="2.400" stroke-linecap="round" stroke-linejoin="round"><path d="M8.500 1.500c-3 0-4 1-4 3.500v4c0 2.200-.800 3.500-3 4 2.200.500 3 1.800 3 4v4c0 2.500 1 3.500 4 3.500"/><path d="M25.500 1.500c3 0 4 1 4 3.500v4c0 2.200.800 3.500 3 4-2.200.500-3 1.800-3 4v4c0 2.500-1 3.500-4 3.500"/><path d="M11.500 17.500h.1M17 17.500h.1M22.500 17.500h.1" stroke-width="2.600"/></svg><span class="t" style="left:112px">sitemap.json</span></div>
<div class="abs" style="left:874px;top:902px;width:2px;height:132px;background:#585858"></div>
<!-- ============ EDITOR ============ -->
<div class="abs" style="left:1234px;top:172px;width:1874px;height:636px;overflow:hidden;background:#2e2e2e">
<div class="abs" style="left:144px;top:308px;width:1040px;height:48px;background:#2d3b54;border-radius:5px"></div>
<div class="abs guide" style="left:144px;top:20px;height:192px"></div>
<div class="abs guide" style="left:202px;top:20px;height:144px"></div>
<div class="abs guide" style="left:144px;top:452px;height:192px"></div>
<div class="abs guide" style="left:202px;top:500px;height:144px"></div>
<div class="abs guide" style="left:260px;top:596px;height:48px"></div>
<div class="abs ln mono" style="left:0;top:20px;color:#626262">13</div>
<div class="abs cl mono" style="left:144px;top:20px">        <span class="g">iv</span><span class="b">:</span> <span class="g">a</span><span class="b">,</span></div>
<div class="abs ln mono" style="left:0;top:68px;color:#626262">14</div>
<div class="abs cl mono" style="left:144px;top:68px">        <span class="g">mode</span><span class="b">:</span> <span class="g">c</span><span class="b">,</span></div>
<div class="abs ln mono" style="left:0;top:116px;color:#626262">15</div>
<div class="abs cl mono" style="left:144px;top:116px">        <span class="g">asBpytes</span><span class="b">:</span> <span class="y">!</span><span class="s">0</span></div>
<div class="abs ln mono" style="left:0;top:164px;color:#626262">16</div>
<div class="abs cl mono" style="left:144px;top:164px">    <span class="b">}</span><span class="p">)</span><span class="b">;</span></div>
<div class="abs ln mono" style="left:0;top:212px;color:#626262">17</div>
<div class="abs cl mono" style="left:144px;top:212px"><span class="y">}</span></div>
<div class="abs ln mono" style="left:0;top:260px;color:#626262">18</div>
<div class="abs ln mono" style="left:0;top:308px;color:#d0d0d0">19</div>
<div class="abs cl mono" style="left:144px;top:308px"><span class="y">var</span> <span class="g">t</span> <span class="y">=</span> <span class="o">require</span><span class="y">(</span><span class="b">&quot;</span><span class="s">cryptojs/cryptojs.js</span><span class="b">&quot;</span><span class="y">)</span><span class="b">.</span><span class="g">Crypto</span><span class="b">,</span> <span class="g">o</span> <span class="y">=</span> <span class="b">&quot;</span><span class="s">9471591874907085</span><span class="b">&quot;</span><span class="b">,</span> <span class="g">c</span> <span class="y">=</span> <span class="b">&quot;</span><span class="s">1979517449714675</span><span class="b">&quot;</span><span class="b">,</span> <span class="g">n</span> <span class="y">=</span> <span class="b">&quot;</span><span class="s">3708991823793221</span><span class="b">&quot;</span><span class="b">,</span> </div>
<div class="abs ln mono" style="left:0;top:356px;color:#626262">20</div>
<div class="abs ln mono" style="left:0;top:404px;color:#626262">21</div>
<div class="abs cl mono" style="left:144px;top:404px"><span class="v">module</span><span class="b">.</span><span class="v">exports</span> <span class="y">=</span> <span class="y">{</span></div>
<div class="abs ln mono" style="left:0;top:452px;color:#626262">22</div>
<div class="abs cl mono" style="left:144px;top:452px">    <span class="o">encryptSystemUserInfo</span><span class="b">:</span> <span class="fy">function</span><span class="p">(</span><span class="s">e</span><span class="p">)</span> <span class="p">{</span></div>
<div class="abs ln mono" style="left:0;top:500px;color:#626262">23</div>
<div class="abs cl mono" style="left:144px;top:500px">        <span class="y">var</span> <span class="g">t</span> <span class="y">=</span> <span class="g">e</span> <span class="y">||</span> <span class="b">{}</span><span class="b">;</span></div>
<div class="abs ln mono" style="left:0;top:548px;color:#626262">24</div>
<div class="abs cl mono" style="left:144px;top:548px">        <span class="b">try</span> <span class="b">{</span></div>
<div class="abs ln mono" style="left:0;top:596px;color:#626262">25</div>
<div class="abs cl mono" style="left:144px;top:596px">            <span class="g">t</span><span class="b">.</span><span class="g">userName</span> <span class="y">=</span> <span class="o">r</span><span class="y">(</span><span class="g">o</span><span class="b">,</span> <span class="g">c</span><span class="b">,</span> <span class="g">e</span><span class="b">.</span><span class="g">userName</span><span class="y">)</span><span class="b">;</span></div>
<div class="abs" style="left:192.8px;top:330px;width:3.400px;height:3.400px;border-radius:.800px;background:#47566f"></div>
<div class="abs" style="left:221.8px;top:330px;width:3.400px;height:3.400px;border-radius:.800px;background:#47566f"></div>
<div class="abs" style="left:250.7px;top:330px;width:3.400px;height:3.400px;border-radius:.800px;background:#47566f"></div>
<div class="abs" style="left:828.7px;top:330px;width:3.400px;height:3.400px;border-radius:.800px;background:#47566f"></div>
<div class="abs" style="left:857.6px;top:330px;width:3.400px;height:3.400px;border-radius:.800px;background:#47566f"></div>
<div class="abs" style="left:886.4px;top:330px;width:3.400px;height:3.400px;border-radius:.800px;background:#47566f"></div>
<div class="abs" style="left:1175.4px;top:330px;width:3.400px;height:3.400px;border-radius:.800px;background:#47566f"></div>
<div class="abs" style="left:260.0px;top:350px;width:4px;height:4px;border-radius:50%;background:#c4c4c4"></div>
<div class="abs" style="left:267.5px;top:350px;width:4px;height:4px;border-radius:50%;background:#c4c4c4"></div>
<div class="abs" style="left:275.0px;top:350px;width:4px;height:4px;border-radius:50%;background:#c4c4c4"></div>
<svg class="abs fold" style="left:108px;top:415px" viewBox="0 0 22 12" fill="none" stroke="#c4c4c4" stroke-width="1.800"><path d="M1 1l10 9.500L21 1"/></svg>
<svg class="abs fold" style="left:108px;top:463px" viewBox="0 0 22 12" fill="none" stroke="#c4c4c4" stroke-width="1.800"><path d="M1 1l10 9.500L21 1"/></svg>
<svg class="abs fold" style="left:108px;top:559px" viewBox="0 0 22 12" fill="none" stroke="#c4c4c4" stroke-width="1.800"><path d="M1 1l10 9.500L21 1"/></svg>
<svg class="abs" style="left:151px;top:262px" width="20" height="27" viewBox="0 0 20 27"><path d="M10 0.500a9.300 9.300 0 0 1 5.800 16.600c-.900.800-1.300 1.500-1.300 2.400v.500h-9v-.500c0-.900-.400-1.600-1.300-2.400a9.300 9.300 0 0 1 5.800-16.600z" fill="#f7c52c"/><rect x="6.300" y="20.500" width="7.400" height="5.200" rx="1" fill="none" stroke="#f7c52c" stroke-width="2"/></svg>
</div>
<!-- ============ PANEL / DEVTOOLS ============ -->
<svg width="0" height="0" style="position:absolute"><defs><linearGradient id="fgrad" x1="0" y1="1" x2="1" y2="0"><stop offset="0" stop-color="#1c4480"/><stop offset="1" stop-color="#265596"/></linearGradient><linearGradient id="ygrad" x1="0" y1="1" x2="1" y2="0"><stop offset="0" stop-color="#c9a63a"/><stop offset="1" stop-color="#a8872c"/></linearGradient><linearGradient id="ggrad" x1="0" y1="1" x2="1" y2="0"><stop offset="0" stop-color="#6a6a6a"/><stop offset="1" stop-color="#555"/></linearGradient></defs></svg>
<div class="abs" style="left:1234px;top:808px;width:1874px;height:60px;background:#333333;border-top:2px solid #444444"></div>
<div class="abs cjk" style="left:1275px;top:820px;height:40px;line-height:40px;font-size:22px;color:#ececec;white-space:nowrap;letter-spacing:-.3px;-webkit-text-stroke:.35px">调试器</div>
<div class="abs cjk" style="left:1381px;top:820px;height:40px;line-height:40px;font-size:22px;color:#8e8e8e;white-space:nowrap;letter-spacing:-.3px;-webkit-text-stroke:.35px">问题</div>
<div class="abs cjk" style="left:1464px;top:820px;height:40px;line-height:40px;font-size:22px;color:#8e8e8e;white-space:nowrap;letter-spacing:-.3px;-webkit-text-stroke:.35px">输出</div>
<div class="abs cjk" style="left:1548px;top:820px;height:40px;line-height:40px;font-size:22px;color:#8e8e8e;white-space:nowrap;letter-spacing:-.3px;-webkit-text-stroke:.35px">终端</div>
<div class="abs" style="left:1274px;top:866px;width:66px;height:2px;background:#e4e4e4"></div>
<div class="abs" style="left:1234px;top:868px;width:1874px;height:702px;background:#292a2d"></div>
<div class="abs" style="left:1234px;top:920px;width:1874px;height:2px;background:#3c3d40"></div>
<div class="abs" style="left:1560px;top:868px;width:136px;height:52px;background:#000"></div>
<svg class="abs" style="left:1253px;top:881px" width="28" height="28" viewBox="0 0 28 28" fill="none" stroke="#919191" stroke-width="2.200"><path d="M22 8V4.500a2 2 0 0 0-2-2H3.500a2 2 0 0 0-2 2v17a2 2 0 0 0 2 2H9"/><path d="M11 10l4.800 15.500 3-6 6.200 6.200 2-2-6.200-6.200 6-3z" fill="#919191" stroke="none"/></svg>
<div class="abs" style="left:1302px;top:878px;width:2px;height:32px;background:#3f4043"></div>
<div class="abs dt" style="left:1339.5px;top:879px">Wxml</div>
<div class="abs dt" style="left:1447.5px;top:879px">Console</div>
<div class="abs dt" style="left:1583.0px;top:879px">Sources</div>
<div class="abs dt" style="left:1719.7px;top:879px">Network</div>
<div class="abs dt" style="left:1857.7px;top:879px">Memory</div>
<div class="abs dt" style="left:1993.4px;top:879px">AppData</div>
<div class="abs dt" style="left:2135.0px;top:879px">Storage</div>
<div class="abs dt" style="left:2267.0px;top:879px">Security</div>
<div class="abs dt" style="left:2421.0px;top:879px">Sensor</div>
<div class="abs dt" style="left:2544.0px;top:879px">Mock</div>
<div class="abs dt" style="left:2651.0px;top:879px">Audits</div>
<div class="abs dt" style="left:2766.0px;top:879px">Trace</div>
<div class="abs dt" style="left:2872.8px;top:879px">Vulnerability</div>
<div class="abs" style="left:1234px;top:974px;width:1874px;height:2px;background:#3c3d40"></div>
<div class="abs" style="left:1234px;top:922px;width:94px;height:52px;background:#000"></div>
<div class="abs dt" style="left:1253.7px;top:933px">Page</div>
<div class="abs dt" style="left:1347.5px;top:933px">Filesystem</div>
<div class="abs dt" style="left:1501.0px;top:933px">Overrides</div>
<svg class="abs" style="left:1641px;top:938px" width="20" height="20" viewBox="0 0 20 20" fill="none" stroke="#a6a6a6" stroke-width="2.200"><path d="M2 2.500l7.500 7.500L2 17.500M10 2.500l7.500 7.500-7.500 7.500"/></svg>
<div class="abs" style="left:1723px;top:934px;width:6px;height:6px;border-radius:50%;background:#9a9a9a;box-shadow:0 10.500px 0 #9a9a9a,0 21px 0 #9a9a9a"></div>
<div class="abs" style="left:1758px;top:921px;width:2px;height:530px;background:#3c3d40"></div>
<svg class="abs" style="left:1778px;top:934px" width="30" height="28" viewBox="0 0 30 28" fill="none" stroke="#8f8f8f" stroke-width="2"><rect x="1" y="1.500" width="28" height="24"/><path d="M8 1.500v24"/><path d="M23 7.500v12l-9.500-6z" fill="#8f8f8f" stroke="none"/></svg>
<div class="abs dt" style="left:1835px;top:933px;letter-spacing:.15px">cryptojs.js? [sm]</div>
<div class="abs dt" style="left:2067.5px;top:933px;letter-spacing:.16px">cryptojs.js? [sm]:formatted</div>
<div class="abs" style="left:2392px;top:922px;width:300px;height:52px;background:#000"></div>
<div class="abs dt" style="left:2411px;top:933px;letter-spacing:.09px">cryptorservice.js? [sm]</div>
<svg class="abs" style="left:2665px;top:941px" width="14" height="14" viewBox="0 0 14 14" stroke="#8a8a8a" stroke-width="2.200" fill="none"><path d="M1 1l12 12M13 1L1 13"/></svg>
<svg class="abs" style="left:2709px;top:938px" width="20" height="20" viewBox="0 0 20 20" fill="none" stroke="#a6a6a6" stroke-width="2.200"><path d="M2 2.500l7.500 7.500L2 17.500M10 2.500l7.500 7.500-7.500 7.500"/></svg>
<svg class="abs" style="left:2978px;top:934px" width="30" height="28" viewBox="0 0 30 28" fill="none" stroke="#8f8f8f" stroke-width="2"><rect x="1" y="1.500" width="28" height="24"/><path d="M22 1.500v24"/><path d="M7 7.500v12l9.500-6z" fill="#8f8f8f" stroke="none"/></svg>
<div class="abs" style="left:3024px;top:921px;width:2px;height:530px;background:#3c3d40"></div>
<div class="abs" style="left:3050px;top:941px;width:6px;height:15px;background:#9a9a9a;box-shadow:12px 0 0 #9a9a9a"></div>
<svg class="abs" style="left:3096px;top:936px" width="12" height="24" viewBox="0 0 12 24" fill="none" stroke="#8a8a8a" stroke-width="3"><path d="M2 22C2 12 6 6 14 4"/></svg>
<div class="abs tr" style="top:980px"><i class="tri d" style="left:10px"></i><svg style="position:absolute;left:36px;top:8px" width="28" height="24" viewBox="0 0 28 24" fill="none" stroke="#9a9a9a" stroke-width="2.400"><rect x="1.500" y="1.500" width="24.500" height="21" rx="2.200"/><path d="M1.500 4.400h24.500" stroke-width="3.600"/></svg><span class="t" style="left:74px">top</span></div>
<div class="abs tr" style="top:1020px"><i class="tri d" style="left:34px"></i><svg style="position:absolute;left:52px;top:7px" width="38" height="26" viewBox="0 0 38 26" fill="none" stroke="#9a9a9a" stroke-width="2.800"><path d="M9.500 24h19.500a6.600 6.600 0 0 0 1.200-13.100 10 10 0 0 0-19.300-1.800 7.600 7.600 0 0 0-1.400 14.900z"/></svg><span class="t" style="left:99px">127.0.0.1:49006</span></div>
<div class="abs tr" style="top:1060px"><i class="tri d" style="left:58px"></i><svg style="position:absolute;left:84px;top:10px" width="28" height="24" viewBox="0 0 28 24"><path d="M0 2.800a2.300 2.300 0 0 1 2.300-2.300h7.700a2.300 2.300 0 0 1 1.900.900l1.900 2.400h11.900a2.300 2.300 0 0 1 2.300 2.300v15.100a2.300 2.300 0 0 1-2.300 2.300h-23.400a2.300 2.300 0 0 1-2.300-2.300z" fill="url(#fgrad)"/></svg><span class="t" style="left:122px">appservice</span></div>
<div class="abs tr" style="top:1100px"><i class="tri d" style="left:82px"></i><svg style="position:absolute;left:108px;top:10px" width="28" height="24" viewBox="0 0 28 24"><path d="M0 2.800a2.300 2.300 0 0 1 2.300-2.300h7.700a2.300 2.300 0 0 1 1.900.900l1.900 2.400h11.900a2.300 2.300 0 0 1 2.300 2.300v15.100a2.300 2.300 0 0 1-2.300 2.300h-23.400a2.300 2.300 0 0 1-2.300-2.300z" fill="url(#fgrad)"/></svg><span class="t" style="left:146px"><span style="letter-spacing:-1.700px">__</span>dev<span style="letter-spacing:-1.700px">__</span></span></div>
<div class="abs tr" style="top:1140px"><svg style="position:absolute;left:132px;top:4px" width="25" height="32" viewBox="0 0 25 32"><path d="M0 2.500a2 2 0 0 1 2-2h13l10 10v19a2 2 0 0 1-2 2h-21a2 2 0 0 1-2-2z" fill="url(#ygrad)"/><path d="M15 .500l10 10h-8a2 2 0 0 1-2-2z" fill="#242424" opacity=".55"/></svg><span class="t" style="left:170px">asdebug.js</span></div>
<div class="abs tr" style="top:1180px"><svg style="position:absolute;left:107px;top:4px" width="25" height="32" viewBox="0 0 25 32"><path d="M0 2.500a2 2 0 0 1 2-2h13l10 10v19a2 2 0 0 1-2 2h-21a2 2 0 0 1-2-2z" fill="url(#ggrad)"/><path d="M15 .500l10 10h-8a2 2 0 0 1-2-2z" fill="#242424" opacity=".55"/></svg><span class="t" style="left:146px">mainframe?t=1629874027126&amp;c</span></div>
<div class="abs tr" style="top:1220px"><i class="tri r" style="left:37px"></i><svg style="position:absolute;left:52px;top:7px" width="38" height="26" viewBox="0 0 38 26" fill="none" stroke="#9a9a9a" stroke-width="2.800"><path d="M9.500 24h19.500a6.600 6.600 0 0 0 1.200-13.100 10 10 0 0 0-19.300-1.800 7.600 7.600 0 0 0-1.400 14.900z"/></svg><span class="t" style="left:99px">(no domain)</span></div>
<div class="abs tr" style="top:1260px"><i class="tri r" style="left:37px"></i><svg style="position:absolute;left:59px;top:8px" width="28" height="24" viewBox="0 0 28 24" fill="none" stroke="#9a9a9a" stroke-width="2.400"><rect x="1.500" y="1.500" width="24.500" height="21" rx="2.200"/><path d="M1.500 4.400h24.500" stroke-width="3.600"/></svg><span class="t" style="left:98px">instanceframe</span></div>
<div class="abs tr" style="top:1300px"><i class="tri d" style="left:34px"></i><svg style="position:absolute;left:59px;top:8px" width="28" height="24" viewBox="0 0 28 24" fill="none" stroke="#9a9a9a" stroke-width="2.400"><rect x="1.500" y="1.500" width="24.500" height="21" rx="2.200"/><path d="M1.500 4.400h24.500" stroke-width="3.600"/></svg><span class="t" style="left:98px">instanceframe</span></div>
<div class="abs tr" style="top:1340px"><i class="tri d" style="left:58px"></i><svg style="position:absolute;left:76px;top:7px" width="38" height="26" viewBox="0 0 38 26" fill="none" stroke="#9a9a9a" stroke-width="2.800"><path d="M9.500 24h19.500a6.600 6.600 0 0 0 1.200-13.100 10 10 0 0 0-19.300-1.800 7.600 7.600 0 0 0-1.400 14.900z"/></svg><span class="t" style="left:123px">127.0.0.1:49006</span></div>
<div class="abs tr" style="top:1380px"><i class="tri d" style="left:82px"></i><svg style="position:absolute;left:108px;top:10px" width="28" height="24" viewBox="0 0 28 24"><path d="M0 2.800a2.300 2.300 0 0 1 2.300-2.300h7.700a2.300 2.300 0 0 1 1.900.900l1.900 2.400h11.900a2.300 2.300 0 0 1 2.300 2.300v15.100a2.300 2.300 0 0 1-2.300 2.300h-23.400a2.300 2.300 0 0 1-2.300-2.300z" fill="url(#fgrad)"/></svg><span class="t" style="left:146px">appservice</span></div>
<div class="abs" style="left:1730px;top:976px;width:28px;height:446px;background:#2d2e30;border-left:1px solid #353638"></div>
<div class="abs" style="left:1731px;top:977px;width:26px;height:156px;background:#393a3c;border:1px solid #48494b;border-radius:3px"></div>
<div class="abs" style="left:1234px;top:1422px;width:524px;height:29px;background:#2d2e30;border-top:1px solid #353638"></div>
<div class="abs" style="left:1235px;top:1423px;width:348px;height:27px;background:#393a3c;border:1px solid #48494b;border-radius:3px"></div>
<div class="abs" style="left:1730px;top:1422px;width:28px;height:29px;background:#2a2b2d;border-left:1px solid #353638;border-top:1px solid #353638"></div>
<div class="abs" style="left:1760px;top:976px;width:1264px;height:421px;background:#242424;overflow:hidden"></div>
<div class="abs" style="left:1842px;top:976px;width:2px;height:421px;background:#3a3a3a"></div>
<div class="abs" style="left:1844px;top:976px;width:1152px;height:421px;overflow:hidden">
<div class="abs sc mono" style="left:8px;top:7px"><span class="k">function</span> <span class="d">r</span>(<span class="d">r</span>, <span class="d">e</span>, <span class="d">o</span>) {</div>
<div class="abs sc mono" style="left:8px;top:33px">    <span class="k">var</span> <span class="d">c</span> <span class="pr">=</span> <span class="k">new</span> t.<span class="pr">mode</span>.<span class="pr">CBC</span>(t.<span class="pr">pad</span>.<span class="pr">pkcs7</span>), <span class="d">n</span> <span class="pr">=</span> t.<span class="pr">charenc</span>.<span class="pr">UTF8</span>.<span class="pr">stringToBytes</span>(o), <span class="d">s</span> <span class="pr">=</span> t.<span class="pr">charenc</span>.<span class="pr">UTF8</span>.<span class="pr">stringToBytes</span>(r);</div>
<div class="abs sc mono" style="left:8px;top:59px">    <span class="k">return</span> t.<span class="pr">AES</span>.<span class="pr">encrypt</span>(n, s, {</div>
<div class="abs sc mono" style="left:8px;top:85px">        <span class="pr">iv</span>: a,</div>
<div class="abs sc mono" style="left:8px;top:111px">        <span class="pr">mode</span>: c,</div>
<div class="abs sc mono" style="left:8px;top:137px">        <span class="pr">asBpytes</span>: <span class="pr">!</span><span class="n">0</span></div>
<div class="abs sc mono" style="left:8px;top:163px">    });</div>
<div class="abs sc mono" style="left:8px;top:189px">}</div>
<div class="abs sc mono" style="left:8px;top:241px"><span class="k">function</span> <span class="d">e</span>(<span class="d">r</span>, <span class="d">e</span>, <span class="d">o</span>) {</div>
<div class="abs sc mono" style="left:8px;top:267px">    <span class="k">var</span> <span class="d">c</span> <span class="pr">=</span> <span class="k">new</span> t.<span class="pr">mode</span>.<span class="pr">CBC</span>(t.<span class="pr">pad</span>.<span class="pr">pkcs7</span>), <span class="d">n</span> <span class="pr">=</span> t.<span class="pr">util</span>.<span class="pr">base64ToBytes</span>(o), <span class="d">s</span> <span class="pr">=</span> t.<span class="pr">charenc</span>.<span class="pr">UTF8</span>.<span class="pr">stringToBytes</span>(r);</div>
<div class="abs sc mono" style="left:8px;top:293px">    <span class="k">return</span> t.<span class="pr">AES</span>.<span class="pr">decrypt</span>(n, s, {</div>
<div class="abs sc mono" style="left:8px;top:319px">        <span class="pr">iv</span>: a,</div>
<div class="abs sc mono" style="left:8px;top:345px">        <span class="pr">mode</span>: c,</div>
<div class="abs sc mono" style="left:8px;top:371px">        <span class="pr">asBpytes</span>: <span class="pr">!</span><span class="n">0</span></div>
</div>
<div class="abs sl mono" style="top:983px;color:#e8eaed">1</div>
<svg class="abs bp" style="top:1010px" viewBox="0 0 90 26" preserveAspectRatio="none"><path d="M0 0h82l8 13-8 13h-82z" fill="#4d82e8"/></svg>
<div class="abs sl mono" style="top:1009px;color:#ffffff">2</div>
<div class="abs sl mono" style="top:1035px;color:#e8eaed">3</div>
<div class="abs sl mono" style="top:1061px;color:#e8eaed">4</div>
<div class="abs sl mono" style="top:1087px;color:#e8eaed">5</div>
<div class="abs sl mono" style="top:1113px;color:#e8eaed">6</div>
<div class="abs sl mono" style="top:1139px;color:#8a8a8a">7</div>
<svg class="abs bp" style="top:1166px" viewBox="0 0 90 26" preserveAspectRatio="none"><path d="M0 0h82l8 13-8 13h-82z" fill="#4d82e8"/></svg>
<div class="abs sl mono" style="top:1165px;color:#ffffff">8</div>
<div class="abs sl mono" style="top:1191px;color:#8a8a8a">9</div>
<div class="abs sl mono" style="top:1217px;color:#e8eaed">10</div>
<svg class="abs bp" style="top:1244px" viewBox="0 0 90 26" preserveAspectRatio="none"><path d="M0 0h82l8 13-8 13h-82z" fill="#4d82e8"/></svg>
<div class="abs sl mono" style="top:1243px;color:#ffffff">11</div>
<div class="abs sl mono" style="top:1269px;color:#e8eaed">12</div>
<div class="abs sl mono" style="top:1295px;color:#e8eaed">13</div>
<div class="abs sl mono" style="top:1321px;color:#e8eaed">14</div>
<div class="abs sl mono" style="top:1347px;color:#e8eaed">15</div>
<div class="abs sl mono" style="top:1373px;color:#8a8a8a">16</div>
<div class="abs" style="left:1844px;top:1369px;width:1180px;height:28px;background:#262626;border-top:1px solid #353535"></div>
<div class="abs" style="left:1845px;top:1370px;width:520px;height:26px;background:#343434;border:1px solid #444;border-radius:3px"></div>
<div class="abs" style="left:2996px;top:976px;width:28px;height:393px;background:#272727;border-left:1px solid #353535"></div>
<div class="abs" style="left:2997px;top:977px;width:26px;height:39px;background:#343434;border:1px solid #444;border-radius:3px"></div>
<div class="abs" style="left:2996px;top:1369px;width:28px;height:28px;background:#242424;border-left:1px solid #353535;border-top:1px solid #353535"></div>
<div class="abs" style="left:1760px;top:1397px;width:1264px;height:54px;background:#292a2d;border-top:2px solid #3c3d40"></div>
<div class="abs mono" style="left:1777px;top:1408px;font-size:26px;font-weight:bold;color:#8e8e8e;line-height:30px;letter-spacing:-1px">{}</div>
<div class="abs dt" style="left:1838.500px;top:1409px">Line 23, Column 25</div>
<div class="abs dt" style="left:2422px;top:1409px">(source mapped from <span style="color:#b0b0b0;text-decoration:underline">cryptorservice.js</span>)</div>
<div class="abs dt" style="left:2851px;top:1409px">Coverage: n/a</div>
<div class="abs" style="left:3026px;top:976px;width:82px;height:475px;background:#242424"></div>
<div class="abs sec" style="top:976px"><i class="tri r" style="left:14px;top:11px"></i><span style="position:absolute;left:34px;top:0">Watch</span></div>
<div class="abs sec" style="top:1018px"><i class="tri d" style="left:11px;top:14px"></i><span style="position:absolute;left:34px;top:0">Call Stack</span></div>
<div class="abs sec" style="top:1115px"><i class="tri d" style="left:11px;top:14px"></i><span style="position:absolute;left:34px;top:0">Scope</span></div>
<div class="abs sec" style="top:1211px"><i class="tri d" style="left:11px;top:14px"></i><span style="position:absolute;left:34px;top:0">Breakpoints</span></div>
<svg class="abs cb" style="top:1267px" viewBox="0 0 24 24"><path d="M5.500 12.500l4.500 4.800 8.800-11.500" fill="none" stroke="#2a2a2a" stroke-width="3"/></svg>
<svg class="abs cb" style="top:1349px" viewBox="0 0 24 24"><path d="M5.500 12.500l4.500 4.800 8.800-11.500" fill="none" stroke="#2a2a2a" stroke-width="3"/></svg>
<svg class="abs cb" style="top:1431px" viewBox="0 0 24 24"><path d="M5.500 12.500l4.500 4.800 8.800-11.500" fill="none" stroke="#2a2a2a" stroke-width="3"/></svg>
<div class="abs dt" style="left:3086px;top:1265px;width:22px;overflow:hidden">appservice.js</div>
<div class="abs dt" style="left:3086px;top:1299px;width:22px;overflow:hidden">console.l</div>
<div class="abs dt" style="left:3086px;top:1346px;width:22px;overflow:hidden">cryptorser</div>
<div class="abs dt" style="left:3086px;top:1381px;width:22px;overflow:hidden">var c = ne</div>
<div class="abs dt" style="left:3086px;top:1428px;width:22px;overflow:hidden">cryptorser</div>
<div class="abs" style="left:3026px;top:1336px;width:82px;height:1px;background:#333"></div>
<div class="abs" style="left:3026px;top:1417px;width:82px;height:1px;background:#333"></div>
<div class="abs" style="left:1234px;top:1450px;width:1874px;height:2px;background:#464648"></div>
<div class="abs" style="left:1234px;top:1452px;width:1874px;height:118px;background:#292a2d"></div>
<div class="abs" style="left:1418px;top:1452px;width:134px;height:53px;background:#000"></div>
<div class="abs" style="left:1234px;top:1505px;width:1874px;height:2px;background:#3c3d40"></div>
<div class="abs" style="left:1264px;top:1466px;width:6px;height:6px;border-radius:50%;background:#9a9a9a;box-shadow:0 10.200px 0 #9a9a9a,0 20.400px 0 #9a9a9a"></div>
<div class="abs dt" style="left:1309.700px;top:1463px">Console</div>
<div class="abs dt" style="left:1437.800px;top:1463px">Search</div>
<svg class="abs" style="left:1527px;top:1470px" width="13" height="13" viewBox="0 0 13 13" stroke="#8a8a8a" stroke-width="2.200" fill="none"><path d="M1 1l11 11M12 1L1 12"/></svg>
<div class="abs dt" style="left:1251px;top:1518px;font-weight:bold;letter-spacing:-.5px;-webkit-text-stroke:0">Aa</div>
<div class="abs dt" style="left:1314px;top:1515px;font-weight:bold;-webkit-text-stroke:0">.*</div>
<div class="abs" style="left:1348px;top:1510px;width:526px;height:44px;background:#212122;border:2px solid #2e6bb8"></div>
<div class="abs dt" style="left:1354.500px;top:1517px;letter-spacing:.19px">var t = require(&quot;cryptojs/cryptojs.js&quot;).Crypto, o =</div>
<svg class="abs" style="left:1966px;top:1519px" width="26" height="26" viewBox="0 0 26 26" fill="none" stroke="#9a9a9a" stroke-width="3.200"><path d="M21.500 13a9 9 0 1 1-3-6.700"/><path d="M22.500 1.500v9h-9z" fill="#9a9a9a" stroke="none"/></svg>
<svg class="abs" style="left:2022px;top:1519px" width="26" height="26" viewBox="0 0 26 26" fill="none" stroke="#9a9a9a" stroke-width="3.400"><circle cx="13" cy="13" r="10.500"/><path d="M5.500 5.500l15 15"/></svg>
<div class="abs" style="left:1234px;top:1559px;width:1874px;height:2px;background:#4a4b4e"></div>
<div class="abs" style="left:1234px;top:1561px;width:1874px;height:9px;background:#252526"></div>
<svg class="abs" style="left:1234px;top:1440px;z-index:20" width="1874" height="90" viewBox="0 0 1874 90" font-family="'DejaVu Serif','Liberation Serif',serif" font-size="57.600" fill="none" stroke="#b4b4b4" stroke-width=".900"><text id="wm0" x="109.1" y="57" textLength="414.2" lengthAdjust="spacing">AaronLuo's</text><text id="wm1" x="572.6" y="57" textLength="147.8" lengthAdjust="spacing">Blog</text><text id="wm2" x="769.6" y="57" textLength="182.8" lengthAdjust="spacing">from</text><text id="wm3" x="1003.4" y="57" textLength="802.9" lengthAdjust="spacing">byAaronluo.github.io</text></svg>
</div></body></html>
